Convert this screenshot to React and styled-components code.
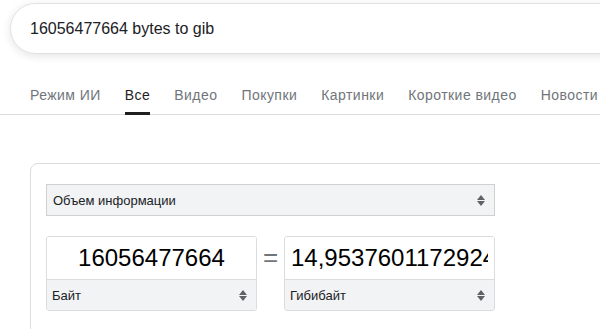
import React from 'react'
import styled, { createGlobalStyle } from 'styled-components'

const GlobalStyle = createGlobalStyle`
  body {
    margin: 0;
    background: #fff;
    font-family: "Liberation Sans", Arial, sans-serif;
  }
`

const Page = styled.div`
  width: 600px;
  height: 329px;
  overflow: hidden;
`

const Header = styled.div`
  padding: 3px 0 0 10px;
`

const SearchBox = styled.div`
  width: 720px;
  height: 49px;
  border: 1px solid #dfe1e5;
  border-radius: 26px;
  box-shadow: 0 2px 8px rgba(32, 33, 36, 0.12);
  display: flex;
  align-items: center;
  padding-left: 19px;
  box-sizing: content-box;
  font-size: 16px;
  color: #202124;
`

const TabBar = styled.div`
  display: flex;
  gap: 24px;
  margin-top: 21px;
  padding-left: 30px;
  border-bottom: 1px solid #dadce0;
  height: 39px;
`

const Tab = styled.div`
  box-sizing: border-box;
  height: 40px;
  padding-top: 10px;
  line-height: 20px;
  font-size: 14px;
  letter-spacing: 0.45px;
  white-space: nowrap;
  color: ${p => (p.active ? '#1f1f1f' : '#70757a')};
  border-bottom: 3px solid ${p => (p.active ? '#1f1f1f' : 'transparent')};
`

const Card = styled.div`
  margin: 48px 0 0 30px;
  width: 700px;
  height: 200px;
  border: 1px solid #dadce0;
  border-radius: 8px;
  padding: 20px 0 0 15px;
`

const Select = styled.div`
  box-sizing: border-box;
  width: 449px;
  height: 32px;
  border: 1px solid #d0d0d0;
  background: #f1f3f4;
  display: flex;
  align-items: center;
  justify-content: space-between;
  padding: 0 9px 0 6px;
  font-size: 13px;
  color: #202124;
`

const Converter = styled.div`
  display: flex;
  align-items: flex-start;
  margin-top: 20px;
  width: 449px;
`

const UnitBox = styled.div`
  box-sizing: border-box;
  width: ${p => p.w}px;
  height: 75px;
  border: 1px solid #dadce0;
  border-radius: 3px;
  overflow: hidden;
  display: flex;
  flex-direction: column;
`

const ValueInput = styled.input`
  box-sizing: border-box;
  width: 100%;
  height: 42px;
  border: none;
  outline: none;
  padding: 0 6px;
  font-family: "Liberation Sans", Arial, sans-serif;
  font-size: 24px;
  color: #000;
  text-align: center;
  background: #fff;
`

const UnitSelect = styled.div`
  flex: 1;
  background: #f1f3f4;
  border-top: 1px solid #dadce0;
  display: flex;
  align-items: center;
  justify-content: space-between;
  padding: 0 9px 0 5px;
  font-size: 13px;
  color: #202124;
`

const Equals = styled.div`
  width: 27px;
  height: 42px;
  display: flex;
  align-items: center;
  justify-content: center;
  font-size: 26px;
  color: #70757a;
`

const Arrows = () => (
  <svg width="8" height="11" viewBox="0 0 8 11">
    <path d="M4 0 L8 5 H0 Z M0 6 H8 L4 11 Z" fill="#5f6368" />
  </svg>
)

const tabs = ['Режим ИИ', 'Все', 'Видео', 'Покупки', 'Картинки', 'Короткие видео', 'Новости']

export default function App() {
  return (
    <Page>
      <GlobalStyle />
      <Header>
        <SearchBox>16056477664 bytes to gib</SearchBox>
      </Header>
      <TabBar>
        {tabs.map(t => (
          <Tab key={t} active={t === 'Все'}>{t}</Tab>
        ))}
      </TabBar>
      <Card>
        <Select>
          <span>Объем информации</span>
          <Arrows />
        </Select>
        <Converter>
          <UnitBox w={211}>
            <ValueInput readOnly value="16056477664" />
            <UnitSelect>
              <span>Байт</span>
              <Arrows />
            </UnitSelect>
          </UnitBox>
          <Equals>=</Equals>
          <UnitBox w={211}>
            <ValueInput readOnly value="14,953760117292404" />
            <UnitSelect>
              <span>Гибибайт</span>
              <Arrows />
            </UnitSelect>
          </UnitBox>
        </Converter>
      </Card>
    </Page>
  )
}
